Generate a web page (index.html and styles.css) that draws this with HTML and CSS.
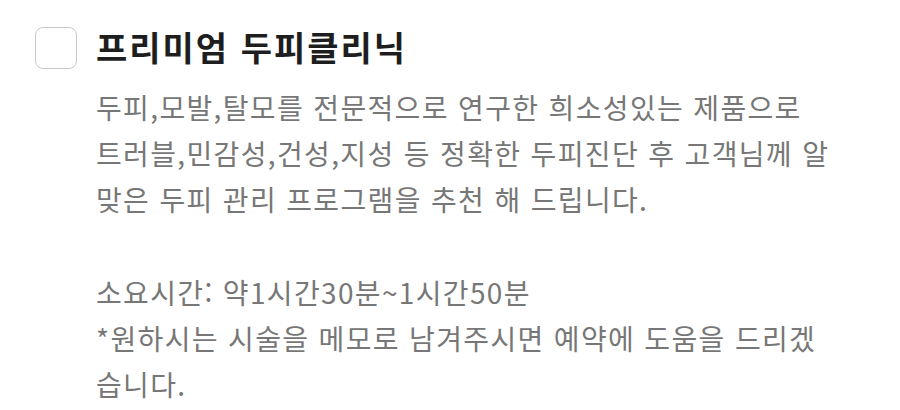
FILE: index.html
```html
<!DOCTYPE html>
<html lang="ko">
<head>
<meta charset="utf-8">
<link rel="stylesheet" href="styles.css">
</head>
<body>
<div class="item">
  <div class="check"></div>
  <div class="content">
    <h1 class="title">프리미엄 두피클리닉</h1>
    <p class="desc">두피,모발,탈모를 전문적으로 연구한 희소성있는 제품으로<br>트러블,민감성,건성,지성 등 정확한 두피진단 후 고객님께 알<br>맞은 두피 관리 프로그램을 추천 해 드립니다.<br><br>소요시간: 약1시간30분~1시간50분<br>*원하시는 시술을 메모로 남겨주시면 예약에 도움을 드리겠<br>습니다.</p>
  </div>
</div>
</body>
</html>
```

FILE: styles.css
```css
html, body {
  margin: 0;
  padding: 0;
  background: #ffffff;
}
body {
  font-family: "Noto Sans CJK KR", "Noto Sans", sans-serif;
  width: 900px;
  height: 410px;
  overflow: hidden;
}
.item {
  display: flex;
  align-items: flex-start;
  gap: 19px;
  padding: 25px 0 0 35px;
}
.check {
  flex: none;
  width: 40px;
  height: 40px;
  border: 1.5px solid #c8c8c8;
  border-radius: 8px;
  margin-top: 2px;
}
.content {
  display: flex;
  flex-direction: column;
}
.title {
  margin: 0;
  font-size: 34px;
  font-weight: 700;
  color: #1e1e1e;
  line-height: 44px;
  letter-spacing: 2px;
}
.desc {
  margin: 15px 0 0;
  font-size: 28px;
  line-height: 46.2px;
  color: #777777;
  letter-spacing: 1.35px;
}
```
